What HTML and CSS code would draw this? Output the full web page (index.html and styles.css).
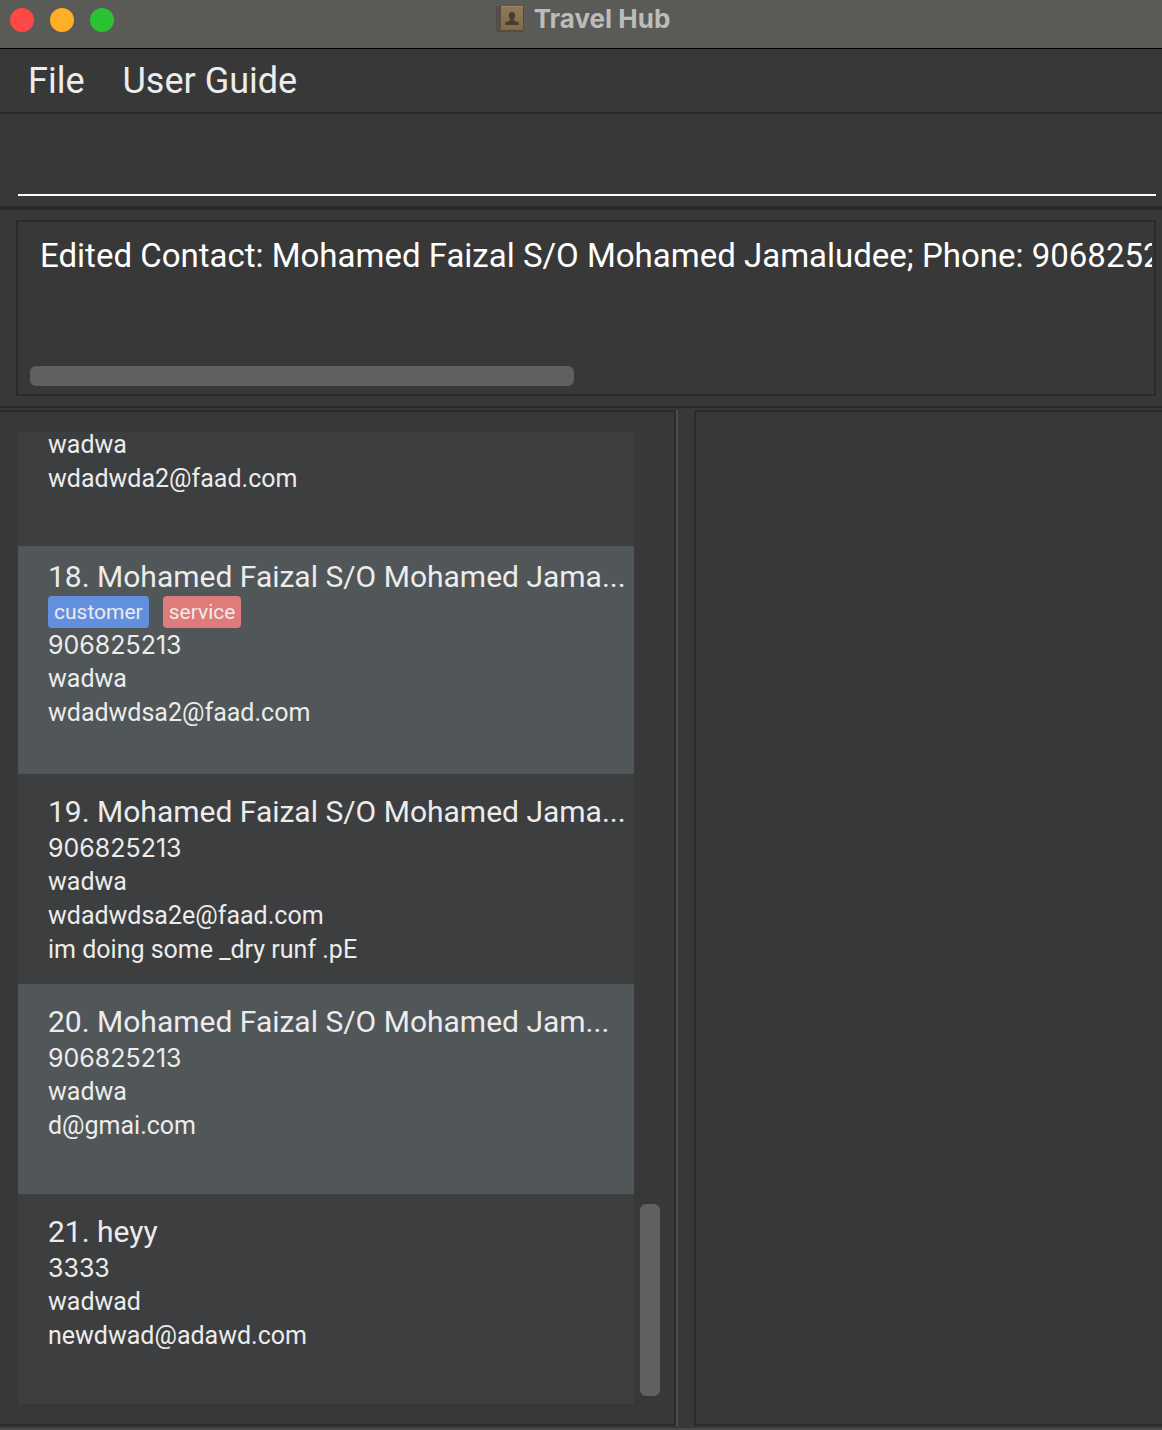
FILE: index.html
```html
<!DOCTYPE html>
<html lang="en">
<head>
<meta charset="utf-8">
<title>Travel Hub</title>
<link rel="stylesheet" href="styles.css">
</head>
<body>
<div class="window">
  <header class="titlebar">
    <div class="lights">
      <button class="light close" aria-label="Close"></button>
      <button class="light minimise" aria-label="Minimise"></button>
      <button class="light zoom" aria-label="Zoom"></button>
    </div>
    <h1 class="title">
      <svg class="book" viewBox="0 0 28 28" aria-hidden="true">
        <defs>
          <linearGradient id="cover" x1="0" y1="0" x2="0" y2="1">
            <stop offset="0" stop-color="#8b7a5c"/>
            <stop offset="1" stop-color="#836b40"/>
          </linearGradient>
        </defs>
        <rect x="0" y="1" width="28" height="26" rx="2" fill="#504c48"/>
        <rect x="1" y="1" width="4" height="24" fill="#564e4a"/>
        <rect x="5" y="1" width="22" height="24" rx="1" fill="url(#cover)"/>
        <rect x="5" y="1" width="22" height="1" fill="#9a8668"/>
        <path d="M16 7c-2.200 0-3.300 1.500-3.200 3.500 0 1.500.6 2.600 1.400 3.300v1.500c-1 .9-4.700 1.200-5.200 3.200V20h14v-1.500c-.5-2-4.200-2.300-5.200-3.200v-1.500c.8-.7 1.400-1.800 1.400-3.300C19.300 8.500 18.200 7 16 7z" fill="#473e31"/>
      </svg>
      <span>Travel Hub</span>
    </h1>
  </header>

  <nav class="menubar">
    <button class="menu">File</button>
    <button class="menu">User Guide</button>
  </nav>

  <div class="command">
    <input class="command-input" type="text" aria-label="Command">
  </div>

  <section class="result">
    <div class="result-box">
      <textarea class="result-text" readonly wrap="off" rows="1" aria-label="Result">Edited Contact: Mohamed Faizal S/O Mohamed Jamaludee; Phone: 906825213</textarea>
      <div class="track-x"><div class="thumb-x"></div></div>
    </div>
  </section>

  <main class="split">
    <section class="pane contacts">
      <ul class="list">
        <li class="card partial">
          <p class="line">wadwa</p>
          <p class="line">wdadwda2@faad.com</p>
        </li>
        <li class="card">
          <h2 class="name">18. Mohamed Faizal S/O Mohamed Jama...</h2>
          <div class="tags"><span class="tag customer">customer</span><span class="tag service">service</span></div>
          <div class="details">
            <p class="line phone">906825213</p>
            <p class="line">wadwa</p>
            <p class="line">wdadwdsa2@faad.com</p>
          </div>
        </li>
        <li class="card">
          <h2 class="name">19. Mohamed Faizal S/O Mohamed Jama...</h2>
          <div class="details">
            <p class="line phone">906825213</p>
            <p class="line">wadwa</p>
            <p class="line">wdadwdsa2e@faad.com</p>
            <p class="line">im doing some _dry runf .pE</p>
          </div>
        </li>
        <li class="card">
          <h2 class="name">20. Mohamed Faizal S/O Mohamed Jam...</h2>
          <div class="details">
            <p class="line phone">906825213</p>
            <p class="line">wadwa</p>
            <p class="line">d@gmai.com</p>
          </div>
        </li>
        <li class="card">
          <h2 class="name">21. heyy</h2>
          <div class="details">
            <p class="line phone">3333</p>
            <p class="line">wadwad</p>
            <p class="line">newdwad@adawd.com</p>
          </div>
        </li>
      </ul>
      <div class="track-y"><div class="thumb-y"></div></div>
    </section>
    <div class="divider"></div>
    <section class="pane detail"></section>
  </main>
  <footer class="statusbar"></footer>
</div>
</body>
</html>
```
FILE: styles.css
```css
* {
  box-sizing: border-box;
}

body {
  margin: 0;
  background: #383838;
  color: #ececec;
  font-family: Roboto, "Liberation Sans", sans-serif;
}

h1, h2, p, ul {
  margin: 0;
  padding: 0;
  font-weight: 400;
}

button, input, textarea {
  margin: 0;
  padding: 0;
  border: 0;
  outline: 0;
  background: none;
  color: inherit;
  font-family: inherit;
}

.window {
  display: flex;
  flex-direction: column;
  height: 100vh;
  overflow: hidden;
}

/* Title bar */
.titlebar {
  display: grid;
  grid-template-columns: 1fr auto 1fr;
  align-items: start;
  padding: 0 6px 0 10px;
  height: 49px;
  flex: none;
  background: #5a5a57;
  border-bottom: 1px solid #000;
}

.lights {
  display: flex;
  gap: 16px;
  padding-top: 8px;
}

.light {
  width: 24px;
  height: 24px;
  border-radius: 50%;
}

.close { background: #ff4845; }
.minimise { background: #ffaf26; }
.zoom { background: #29c231; }

.title {
  display: flex;
  align-items: center;
  gap: 10px;
  height: 37px;
  color: #bcbcba;
  font-family: Inter, "Liberation Sans", sans-serif;
  font-size: 26px;
  font-weight: 700;
}

.book {
  width: 28px;
  height: 28px;
}

/* Menu */
.menubar {
  display: flex;
  gap: 38px;
  flex: none;
  height: 65px;
  padding: 0 28px;
  border-bottom: 2px solid #2b2b2b;
}

.menu {
  font-size: 36px;
  line-height: 62px;
}

/* Command box */
.command {
  flex: none;
  padding: 20px 6px 10px 18px;
  border-bottom: 4px solid #2b2b2b;
}

.command-input {
  display: block;
  width: 100%;
  height: 62px;
  border-bottom: 2px solid #fff;
  color: #fff;
  font-size: 33px;
}

/* Result display */
.result {
  flex: none;
  padding: 10px 6px 10px 16px;
  border-bottom: 2px solid #2b2b2b;
}

.result-box {
  display: flex;
  flex-direction: column;
  justify-content: space-between;
  height: 176px;
  padding: 12px 2px 8px 12px;
  border: 2px solid #2b2b2b;
}

.result-text {
  display: block;
  width: 100%;
  height: 44px;
  padding-left: 10px;
  overflow: hidden;
  resize: none;
  color: #fff;
  font-size: 33px;
  line-height: 44px;
  white-space: pre;
}

.thumb-x {
  width: 48.5%;
  height: 20px;
  border-radius: 6px;
  background: #606060;
}

/* Split panes */
.split {
  display: grid;
  grid-template-columns: minmax(0, 13fr) 18px minmax(0, 9fr);
  grid-template-rows: minmax(0, 1fr);
  flex: 1;
  min-height: 0;
  padding-top: 2px;
}

.pane {
  border: 2px solid #2b2b2b;
}

.contacts {
  display: flex;
  gap: 6px;
  padding: 20px 14px 20px 18px;
  border-left: 0;
}

.detail {
  border-right: 0;
}

.divider {
  border-left: 2px solid #4d4d4d;
}

.list {
  display: flex;
  flex-direction: column;
  justify-content: flex-end;
  flex: 1;
  min-width: 0;
  overflow: hidden;
  list-style: none;
}

.card {
  display: flex;
  flex-direction: column;
  justify-content: center;
  flex: none;
  min-height: 210px;
  padding: 12px 8px 10px 30px;
  background: #3c3e3f;
  white-space: nowrap;
}

.card:nth-child(even) {
  background: #515658;
}

.card.partial {
  justify-content: flex-start;
  min-height: 118px;
  padding-top: 0;
}

.name {
  font-size: 30px;
  line-height: 38px;
}

.details {
  min-height: 136px;
}

.line {
  font-size: 25px;
  line-height: 34px;
}

.phone {
  font-family: Inter, "Liberation Sans", sans-serif;
}

.tags {
  display: flex;
  gap: 14px;
}

.tag {
  padding: 0 6px;
  border-radius: 4px;
  font-size: 21px;
  line-height: 32px;
}

.customer { background: #6290df; }
.service { background: #e07b7b; }

.track-y {
  display: flex;
  flex-direction: column;
  justify-content: flex-end;
  width: 20px;
  padding-bottom: 8px;
}

.thumb-y {
  height: 19.9%;
  border-radius: 6px;
  background: #606060;
}

.statusbar {
  flex: none;
  height: 4px;
  border-bottom: 2px solid #4a4848;
}
```
